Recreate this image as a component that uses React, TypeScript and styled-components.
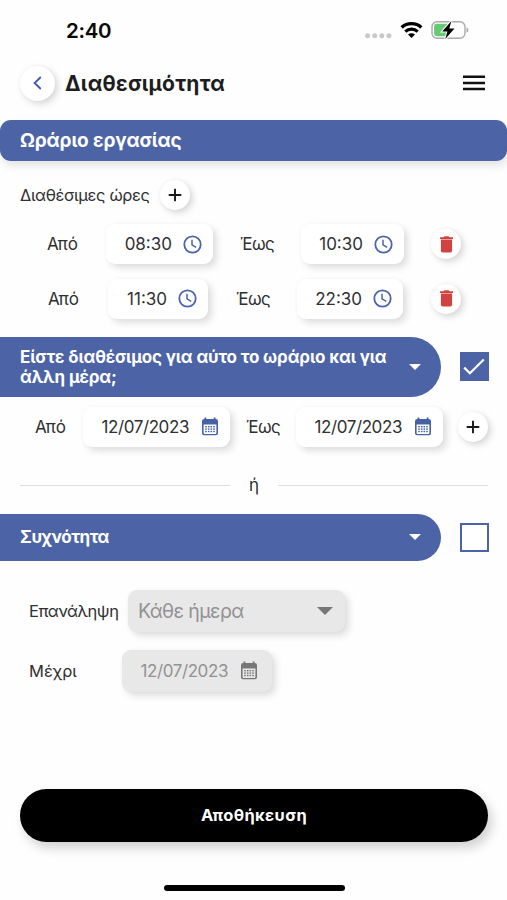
import React from "react";
import styled, { createGlobalStyle } from "styled-components";

const BLUE = "#4c64a6";
const INK = "#303032";

const GlobalStyle = createGlobalStyle`
  * { box-sizing: border-box; }
  body { margin: 0; background: #fefefe; }
  button { border: 0; padding: 0; font: inherit; cursor: pointer; }
`;

const Screen = styled.main`
  width: 507px;
  height: 900px;
  overflow: hidden;
  display: flex;
  flex-direction: column;
  background: #fefefe;
  color: ${INK};
  font-family: Inter, "Noto Sans", sans-serif;
  font-size: 17px;
  line-height: 20px;
`;

const StatusBar = styled.div`
  height: 60px;
  flex: none;
  display: flex;
  align-items: center;
  padding: 0 38px 0 66px;
`;

const Clock = styled.span`
  flex: 1;
  color: #080808;
  font-size: 20.5px;
  font-weight: 600;
  letter-spacing: -0.3px;
  padding-top: 1px;
`;

const Header = styled.header`
  height: 46px;
  flex: none;
  display: flex;
  align-items: center;
  padding: 0 22px 0 20px;
  margin-bottom: 13.5px;
`;

const Title = styled.h1`
  flex: 1;
  margin: 0 0 0 10px;
  padding-top: 1px;
  color: #1d1d1f;
  font-size: 21px;
  font-weight: 700;
  letter-spacing: 0.27px;
`;

const RoundButton = styled.button<{ $size: number }>`
  width: ${(p) => p.$size}px;
  height: ${(p) => p.$size}px;
  flex: none;
  border-radius: 50%;
  display: flex;
  align-items: center;
  justify-content: center;
  background: #fff;
  box-shadow: 3px 3px 7px rgba(0, 0, 0, 0.15), 0 0 5px rgba(0, 0, 0, 0.04);
`;

const IconButton = styled.button`
  display: flex;
  background: none;
`;

const Banner = styled.h2`
  height: 41.5px;
  flex: none;
  margin: 0;
  padding: 1px 20px 0;
  display: flex;
  align-items: center;
  border-radius: 11px;
  background: ${BLUE};
  color: #fff;
  font-size: 19px;
  font-weight: 700;
  letter-spacing: -0.15px;
  box-shadow: 2px 5px 8px rgba(0, 0, 0, 0.1);
`;

const SubHeader = styled.div`
  height: 30px;
  flex: none;
  margin: 19px 0 14px;
  padding-left: 20px;
  display: flex;
  align-items: center;
`;

const Label = styled.span<{ $width?: number; $spacing?: number }>`
  width: ${(p) => (p.$width ? p.$width + "px" : "auto")};
  flex: none;
  letter-spacing: ${(p) => p.$spacing ?? 0}px;
  white-space: nowrap;
`;

const LongLabel = styled(Label)`
  font-size: 16.5px;
`;

const Row = styled.div<{ $left: number; $height: number; $gap?: number }>`
  height: ${(p) => p.$height}px;
  flex: none;
  padding-left: ${(p) => p.$left}px;
  margin-bottom: ${(p) => p.$gap ?? 0}px;
  display: flex;
  align-items: center;
`;

const Field = styled.div<{ $width: number; $right: number; $after?: number; $disabled?: boolean }>`
  width: ${(p) => p.$width}px;
  height: 100%;
  flex: none;
  margin-right: ${(p) => p.$after ?? 0}px;
  padding: 0 ${(p) => p.$right}px 0 10px;
  display: flex;
  align-items: center;
  justify-content: flex-end;
  gap: 11px;
  border-radius: 9px;
  background: ${(p) => (p.$disabled ? "#e8e8e8" : "#fff")};
  color: ${(p) => (p.$disabled ? "#929292" : INK)};
  box-shadow: 4px 4px 7px rgba(0, 0, 0, 0.12), 0 0 5px rgba(0, 0, 0, 0.03);
`;

const SelectField = styled(Field)`
  justify-content: space-between;
  font-size: 19.5px;
  letter-spacing: -0.6px;
`;

const Value = styled.span`
  white-space: nowrap;
`;

const DateValue = styled.span`
  margin-right: 1px;
  letter-spacing: -0.4px;
  white-space: nowrap;
`;

const Section = styled.div<{ $height: number; $gap?: number }>`
  height: ${(p) => p.$height}px;
  flex: none;
  margin-bottom: ${(p) => p.$gap ?? 0}px;
  display: flex;
  align-items: center;
`;

const Pill = styled.button`
  width: 440.5px;
  height: 100%;
  margin-right: 19px;
  padding: 0 20px;
  display: flex;
  align-items: center;
  justify-content: space-between;
  border-radius: 0 30px 30px 0;
  background: ${BLUE};
  color: #fff;
  text-align: left;
  font-size: 17px;
  line-height: 20px;
  font-weight: 700;
`;

const PillText = styled.span<{ $spacing: number }>`
  width: 374px;
  letter-spacing: ${(p) => p.$spacing}px;
`;

const Checkbox = styled.button<{ $checked?: boolean }>`
  width: 29px;
  height: 29px;
  flex: none;
  display: flex;
  align-items: center;
  justify-content: center;
  border: 2px solid ${BLUE};
  background: ${(p) => (p.$checked ? BLUE : "#fff")};
`;

const Divider = styled.div`
  height: 20px;
  flex: none;
  margin: 18.5px 19px 18.5px 20px;
  display: flex;
  align-items: center;
  &::before,
  &::after {
    content: "";
    flex: 1;
    height: 1px;
    background: #dedede;
  }
`;

const Or = styled.span`
  width: 48px;
  text-align: center;
`;

const Save = styled.button`
  height: 53px;
  flex: none;
  margin: 97px 19px 43.5px 20px;
  border-radius: 27px;
  background: #000;
  color: #fff;
  font-size: 16.5px;
  font-weight: 700;
  letter-spacing: 0.35px;
  box-shadow: 4px 6px 11px rgba(0, 0, 0, 0.18);
`;

const HomeIndicator = styled.div`
  width: 181px;
  height: 6px;
  flex: none;
  margin-left: 164px;
  border-radius: 3px;
  background: #000;
`;

const StatusIcons = () => (
  <svg width="104" height="24" viewBox="365 18 104 24" fill="none">
    {[367.6, 374.7, 381.8, 388.9].map((x) => (
      <circle key={x} cx={x} cy="35.7" r="2.5" fill="#c9c9c9" />
    ))}
    <path d="M401.7 27.4c5.4-5 14.2-5 19.6 0" stroke="#000" strokeWidth="3.4" />
    <path d="M405.3 31.6c3.5-3.2 9-3.2 12.4 0" stroke="#000" strokeWidth="3.2" />
    <path d="M408 34.4c2-1.7 5-1.7 7 0l-3.5 3.5z" fill="#000" />
    <rect x="432" y="21.7" width="33" height="16.6" rx="5" stroke="#aaa" strokeWidth="1.4" />
    <path d="M466.5 27.5c2.6.5 2.6 4.5 0 5z" fill="#aaa" />
    <path d="M436.5 23.8h11.5v12.4h-11.5a2.4 2.4 0 0 1-2.4-2.4v-7.6a2.4 2.4 0 0 1 2.4-2.4z" fill="#66cb75" />
    <path d="M451.4 21l-9.2 10.4h5.2L445.3 39l9.2-10.6h-5.2z" fill="#000" stroke="#fff" strokeWidth="2" paintOrder="stroke" />
  </svg>
);

const ClockIcon = () => (
  <svg width="19" height="19" viewBox="0 0 19 19" fill="none" stroke="#4b63b0" strokeWidth="1.8">
    <circle cx="9.5" cy="9.5" r="8.2" />
    <path d="M9 4.7v5.2l4.2 2.5" strokeWidth="1.5" />
  </svg>
);

const CalendarIcon = ({ color = "#4860a8", panel = "#fff" }: { color?: string; panel?: string }) => (
  <svg width="18" height="19" viewBox="0 0 18 19" fill={color}>
    <path d="M3.2 2h11.6A2.2 2.2 0 0 1 17 4.2v12a2.1 2.1 0 0 1-2.1 2.1H3.1A2.1 2.1 0 0 1 1 16.2v-12A2.2 2.2 0 0 1 3.2 2z" />
    <path d="M3.5.5h1.8v3H3.5zM12.7.5h1.8v3h-1.8z" />
    <path d="M2.6 7.4h12.8v8.5q0 1-1 1H3.6q-1 0-1-1z" fill={panel} />
    {[9, 11.4, 13.8].map((y) =>
      [4.2, 6.9, 9.5, 12.2].map((x) => <rect key={`${x}-${y}`} x={x} y={y} width="1.6" height="1.4" />)
    )}
  </svg>
);

const TrashIcon = () => (
  <svg width="13" height="17" viewBox="0 0 13 17" fill="#d1433f">
    <path d="M0 1.2h3.5L4.4.3h4.2l.9.9H13v1.7H0zM.9 3.5h11.2v11.3q0 1.8-1.8 1.8H2.7q-1.8 0-1.8-1.8z" />
  </svg>
);

const PlusIcon = () => (
  <svg width="14" height="14" viewBox="0 0 14 14" stroke="#1a1a1a" strokeWidth="1.9">
    <path d="M7 .7v12.6M.7 7h12.6" />
  </svg>
);

const Caret = ({ width, color }: { width: number; color: string }) => (
  <svg width={width} height={width / 2} viewBox="0 0 12 6" fill={color}>
    <path d="M0 0h12L6 6z" />
  </svg>
);

type Slot = {
  left: number;
  from: string;
  fromLabel: number;
  fromWidth: number;
  fromAfter: number;
  to: string;
  toLabel: number;
  toWidth: number;
  toAfter: number;
};

const slots: Slot[] = [
  { left: 47, from: "08:30", fromLabel: 59, fromWidth: 107, fromAfter: 27, to: "10:30", toLabel: 61, toWidth: 103, toAfter: 27 },
  { left: 48, from: "11:30", fromLabel: 60, fromWidth: 100, fromAfter: 28, to: "22:30", toLabel: 61, toWidth: 106, toAfter: 28 },
];

export default function App() {
  return (
    <>
      <GlobalStyle />
      <Screen>
        <StatusBar>
          <Clock>2:40</Clock>
          <StatusIcons />
        </StatusBar>
        <Header>
          <RoundButton $size={35} aria-label="Πίσω">
            <svg width="9" height="14" viewBox="0 0 9 14" fill="none" stroke="#4059a8" strokeWidth="1.8">
              <path d="M7.8 1L1.6 7l6.2 6" />
            </svg>
          </RoundButton>
          <Title>Διαθεσιμότητα</Title>
          <IconButton aria-label="Μενού">
            <svg width="22" height="16" viewBox="0 0 22 16" fill="#111">
              <path d="M0 .6h22v2.5H0zM0 6.8h22v2.4H0zM0 12.8h22v2.4H0z" />
            </svg>
          </IconButton>
        </Header>
        <Banner>Ωράριο εργασίας</Banner>
        <SubHeader>
          <LongLabel $width={140} $spacing={-0.35}>Διαθέσιμες ώρες</LongLabel>
          <RoundButton $size={30} aria-label="Προσθήκη ώρας">
            <PlusIcon />
          </RoundButton>
        </SubHeader>
        {slots.map((s, i) => (
          <Row key={s.from} $left={s.left} $height={40} $gap={i === 0 ? 14.5 : 18.5}>
            <Label $width={s.fromLabel}>Από</Label>
            <Field $width={s.fromWidth} $right={11} $after={s.fromAfter}>
              <Value>{s.from}</Value>
              <ClockIcon />
            </Field>
            <Label $width={s.toLabel} $spacing={-0.6}>Έως</Label>
            <Field $width={s.toWidth} $right={11} $after={s.toAfter}>
              <Value>{s.to}</Value>
              <ClockIcon />
            </Field>
            <RoundButton $size={30} aria-label="Διαγραφή">
              <TrashIcon />
            </RoundButton>
          </Row>
        ))}
        <Section $height={59.5}>
          <Pill>
            <PillText $spacing={-0.14}>Είστε διαθέσιμος για αύτο το ωράριο και για άλλη μέρα;</PillText>
            <Caret width={12} color="#fff" />
          </Pill>
          <Checkbox $checked aria-label="Άλλη μέρα">
            <svg width="22" height="18" viewBox="0 0 22 18" fill="none" stroke="#fff" strokeWidth="2.2">
              <path d="M1.2 9.6l5.7 5.7L20.8 1.5" />
            </svg>
          </Checkbox>
        </Section>
        <Row $left={35} $height={60}>
          <Label $width={48}>Από</Label>
          <Row $left={0} $height={40}>
            <Field $width={147} $right={11} $after={16}>
              <DateValue>12/07/2023</DateValue>
              <CalendarIcon />
            </Field>
            <Label $width={50} $spacing={-0.6}>Έως</Label>
            <Field $width={147} $right={11} $after={15}>
              <DateValue>12/07/2023</DateValue>
              <CalendarIcon />
            </Field>
            <RoundButton $size={30} aria-label="Προσθήκη ημέρας">
              <PlusIcon />
            </RoundButton>
          </Row>
        </Row>
        <Divider>
          <Or>ή</Or>
        </Divider>
        <Section $height={47.5} $gap={28.5}>
          <Pill>
            <PillText $spacing={-0.4}>Συχνότητα</PillText>
            <Caret width={12} color="#fff" />
          </Pill>
          <Checkbox aria-label="Συχνότητα" />
        </Section>
        <Row $left={29} $height={42} $gap={18}>
          <LongLabel $width={99} $spacing={-0.5}>Επανάληψη</LongLabel>
          <SelectField $width={217} $right={12} $disabled>
            <span>Κάθε ήμερα</span>
            <Caret width={16} color="#777" />
          </SelectField>
        </Row>
        <Row $left={29} $height={42}>
          <LongLabel $width={93}>Μέχρι</LongLabel>
          <Field $width={150} $right={14} $disabled>
            <DateValue>12/07/2023</DateValue>
            <CalendarIcon color="#777" panel="#e8e8e8" />
          </Field>
        </Row>
        <Save>Αποθήκευση</Save>
        <HomeIndicator />
      </Screen>
    </>
  );
}
